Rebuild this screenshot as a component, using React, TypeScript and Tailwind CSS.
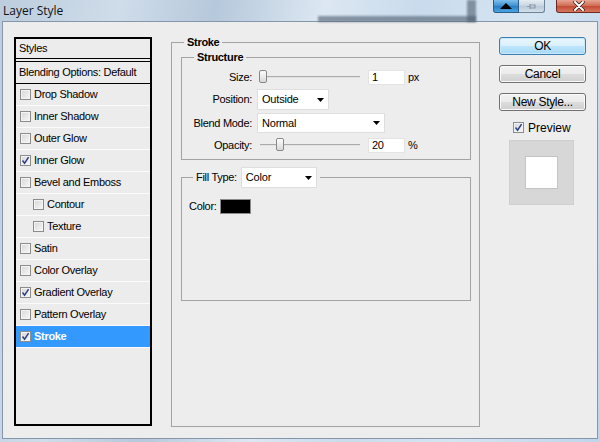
import React from "react";

const UI = "font-['Liberation_Sans',Arial,sans-serif] text-[11px] tracking-[-0.3px] text-black";

const LAYER_STYLES: { label: string; checked?: boolean; indent?: boolean; selected?: boolean }[] = [
  { label: "Drop Shadow" },
  { label: "Inner Shadow" },
  { label: "Outer Glow" },
  { label: "Inner Glow", checked: true },
  { label: "Bevel and Emboss" },
  { label: "Contour", indent: true },
  { label: "Texture", indent: true },
  { label: "Satin" },
  { label: "Color Overlay" },
  { label: "Gradient Overlay", checked: true },
  { label: "Pattern Overlay" },
  { label: "Stroke", checked: true, selected: true },
];

function Checkbox({ checked }: { checked?: boolean }) {
  return (
    <span className="flex h-[11px] w-[11px] shrink-0 items-center justify-center border border-[#8c8c8c] bg-[linear-gradient(135deg,#d6d6d6,#f8f8f8)] shadow-[inset_0_0_0_1px_#f4f4f4]">
      {checked && (
        <svg width="9" height="9" viewBox="0 0 9 9" aria-hidden="true">
          <path d="M1.5 4.5 L3.6 7.2 L7.6 1.2" fill="none" stroke="#2b3f86" strokeWidth={1.5} />
        </svg>
      )}
    </span>
  );
}

function Arrow() {
  return (
    <svg width="7" height="4" viewBox="0 0 7 4" aria-hidden="true">
      <path d="M0 0 H7 L3.5 4 Z" fill="#000" />
    </svg>
  );
}

function Dropdown({ value, width, height }: { value: string; width: string; height: string }) {
  return (
    <div className={`flex items-center justify-between border border-[#dedede] bg-white pl-[4px] pr-[4px] ${width} ${height}`}>
      <span className="tracking-[-0.2px]">{value}</span>
      <Arrow />
    </div>
  );
}

function Slider({ thumb }: { thumb: string }) {
  return (
    <div className="relative ml-[3px] h-[16px] w-[100px]">
      <div className="absolute left-0 right-0 top-[7px] h-[2px] border-t border-[#ababab] bg-[#e2e2e2]" />
      <div className={`absolute top-[1px] h-[13px] w-[8px] rounded-[2px] border border-[#888] bg-[linear-gradient(#fdfdfd,#d9d9d9)] ${thumb}`} />
    </div>
  );
}

function NumBox({ value }: { value: string }) {
  return (
    <div className="ml-[8px] flex h-[15px] w-[37px] items-center border border-[#e4e4e4] bg-white pl-[3px]">{value}</div>
  );
}

function Button({ label, focused }: { label: string; focused?: boolean }) {
  return (
    <div
      className={`flex h-[18px] w-[87px] items-center justify-center rounded-[3px] border font-['Liberation_Sans',Arial,sans-serif] text-[12px] text-black ${
        focused
          ? "border-[#3c7fb1] bg-[linear-gradient(#eaf6fd,#d9f0fc_50%,#bee6fd_51%,#a7d9f5)] shadow-[inset_0_0_0_1px_#c6e8fa]"
          : "border-[#707070] bg-[linear-gradient(#f2f2f2,#ebebeb_50%,#dddddd_51%,#cfcfcf)] shadow-[inset_0_0_0_1px_#fbfbfb]"
      }`}
    >
      {label}
    </div>
  );
}

export default function App() {
  return (
    <div className="relative flex h-[442px] w-[600px] flex-col overflow-hidden bg-[linear-gradient(100deg,#bccddd_0%,#cfdcea_18%,#b6c8db_32%,#dce7f2_48%,#c9dbec_62%,#d5e4f1_78%,#bfd5ea_100%)]">
      {/* Title bar */}
      <div className="relative h-[21px] shrink-0">
        <div className="absolute left-[318px] top-[16px] h-[6px] w-[158px] bg-[#4b5b6c]/60 blur-[1px]" />
        <div className="absolute left-[467px] top-0 h-[22px] w-[9px] bg-[#4b5b6c]/60 blur-[1px]" />
        <span className="absolute left-[3px] top-[3px] font-['Open_Sans',sans-serif] text-[12px] leading-[15px] text-[#111]">Layer Style</span>
        <div className="absolute left-[493px] top-0 flex h-[13px] w-[26px] items-center justify-center rounded-bl-[3px] border border-t-0 border-[#2c5b86] bg-[linear-gradient(#7fc0ee,#3b8fd0_50%,#2a7bc0_51%,#4aa6e4)]">
          <svg width="12" height="6" viewBox="0 0 12 6" aria-hidden="true">
            <path d="M0 6 L6 0 L12 6 Z" fill="#000" />
          </svg>
        </div>
        <div className="absolute left-[519px] top-0 flex h-[13px] w-[26px] items-center justify-center rounded-br-[3px] border border-l-0 border-t-0 border-[#6f8397] bg-[linear-gradient(#e6edf4,#c7d4e1_50%,#b8c8d8_51%,#d4e0ea)]">
          <svg width="12" height="9" viewBox="0 0 12 9" aria-hidden="true">
            <path d="M1 4.5 H4 M4 2 V7 M4 3 H9 V6 H4 M9 2.5 V6.5" fill="none" stroke="#8e9aa6" strokeWidth={1.2} />
          </svg>
        </div>
        <div className="absolute left-[556px] top-0 flex h-[13px] w-[46px] items-center justify-center rounded-bl-[3px] border border-t-0 border-[#6b2a22] bg-[linear-gradient(#e8a593,#cf6a52_50%,#c24a33_51%,#d8775f)]">
          <svg width="12" height="10" viewBox="0 0 12 10" aria-hidden="true">
            <path d="M2 1 L10 9 M10 1 L2 9" stroke="#2b1a18" strokeWidth={3.4} strokeLinecap="round" />
            <path d="M2 1 L10 9 M10 1 L2 9" stroke="#fff" strokeWidth={2} strokeLinecap="round" />
          </svg>
        </div>
      </div>

      {/* Client area */}
      <div className={`mx-[2px] flex h-[418px] shrink-0 border border-[#8596aa] bg-[#ededed] pl-[11px] pt-[15px] ${UI}`}>
        {/* Styles list */}
        <div className="flex h-[389px] w-[138px] shrink-0 flex-col border-2 border-black bg-[#ececec]">
          <div className="flex h-[20px] items-center border-b border-black pl-[3px]">Styles</div>
          <div className="h-[2px]" />
          <div className="flex h-[23px] items-center border-y border-black pl-[3px]">Blending Options: Default</div>
          {LAYER_STYLES.map((s) => (
            <div
              key={s.label}
              className={`flex h-[22px] items-center gap-[3px] border-b border-[#fbfbfb] ${s.indent ? "pl-[17px]" : "pl-[4px]"} ${
                s.selected ? "bg-[#3399ff] font-bold text-white" : ""
              }`}
            >
              <Checkbox checked={s.checked} />
              <span>{s.label}</span>
            </div>
          ))}
        </div>

        {/* Stroke settings */}
        <fieldset className="ml-[19px] mt-[-1px] h-[391px] w-[309px] shrink-0 border border-[#a3a3a3]">
          <legend className="ml-[12px] px-[3px] text-[11px] font-bold leading-[13px]">Stroke</legend>

          <fieldset className="ml-[9px] mt-[2px] h-[109px] w-[290px] border border-[#a3a3a3]">
            <legend className="ml-[12px] px-[3px] font-bold leading-[13px]">Structure</legend>
            <div className="flex flex-col">
              <div className="mt-[5px] flex h-[16px] items-center">
                <span className="w-[70px] text-right">Size:</span>
                <span className="w-[5px]" />
                <Slider thumb="left-[-1px]" />
                <NumBox value="1" />
                <span className="ml-[3px]">px</span>
              </div>
              <div className="mt-[4px] flex h-[21px] items-center">
                <span className="w-[70px] text-right">Position:</span>
                <span className="w-[5px]" />
                <Dropdown value="Outside" width="w-[72px]" height="h-[21px]" />
              </div>
              <div className="mt-[3px] flex h-[20px] items-center">
                <span className="w-[70px] text-right">Blend Mode:</span>
                <span className="w-[5px]" />
                <Dropdown value="Normal" width="w-[128px]" height="h-[20px]" />
              </div>
              <div className="mt-[4px] flex h-[16px] items-center">
                <span className="w-[70px] text-right">Opacity:</span>
                <span className="w-[5px]" />
                <Slider thumb="left-[16px]" />
                <NumBox value="20" />
                <span className="ml-[3px]">%</span>
              </div>
            </div>
          </fieldset>

          <fieldset className="ml-[9px] mt-[7px] h-[134px] w-[290px] border border-[#a3a3a3]">
            <legend className="ml-[11px] flex items-center gap-[4px] px-[3px]">
              <span>Fill Type:</span>
              <Dropdown value="Color" width="w-[76px]" height="h-[21px]" />
            </legend>
            <div className="mt-[10px] flex items-center gap-[3px] pl-[7px]">
              <span>Color:</span>
              <span className="h-[15px] w-[31px] border border-[#8a8a8a] bg-black" />
            </div>
          </fieldset>
        </fieldset>

        {/* Buttons and preview */}
        <div className="ml-[19px] flex w-[87px] shrink-0 flex-col">
          <Button label="OK" focused />
          <div className="mt-[10px]">
            <Button label="Cancel" />
          </div>
          <div className="mt-[10px]">
            <Button label="New Style..." />
          </div>
          <div className="ml-[14px] mt-[10px] flex h-[13px] items-center gap-[4px] text-[12px] tracking-normal">
            <Checkbox checked />
            <span>Preview</span>
          </div>
          <div className="ml-[10px] mt-[6px] flex h-[65px] w-[65px] items-center justify-center border border-[#cfcfcf] bg-[#d7d7d7]">
            <div className="h-[33px] w-[33px] border border-[#c4c4c4] bg-white" />
          </div>
        </div>
      </div>
    </div>
  );
}
